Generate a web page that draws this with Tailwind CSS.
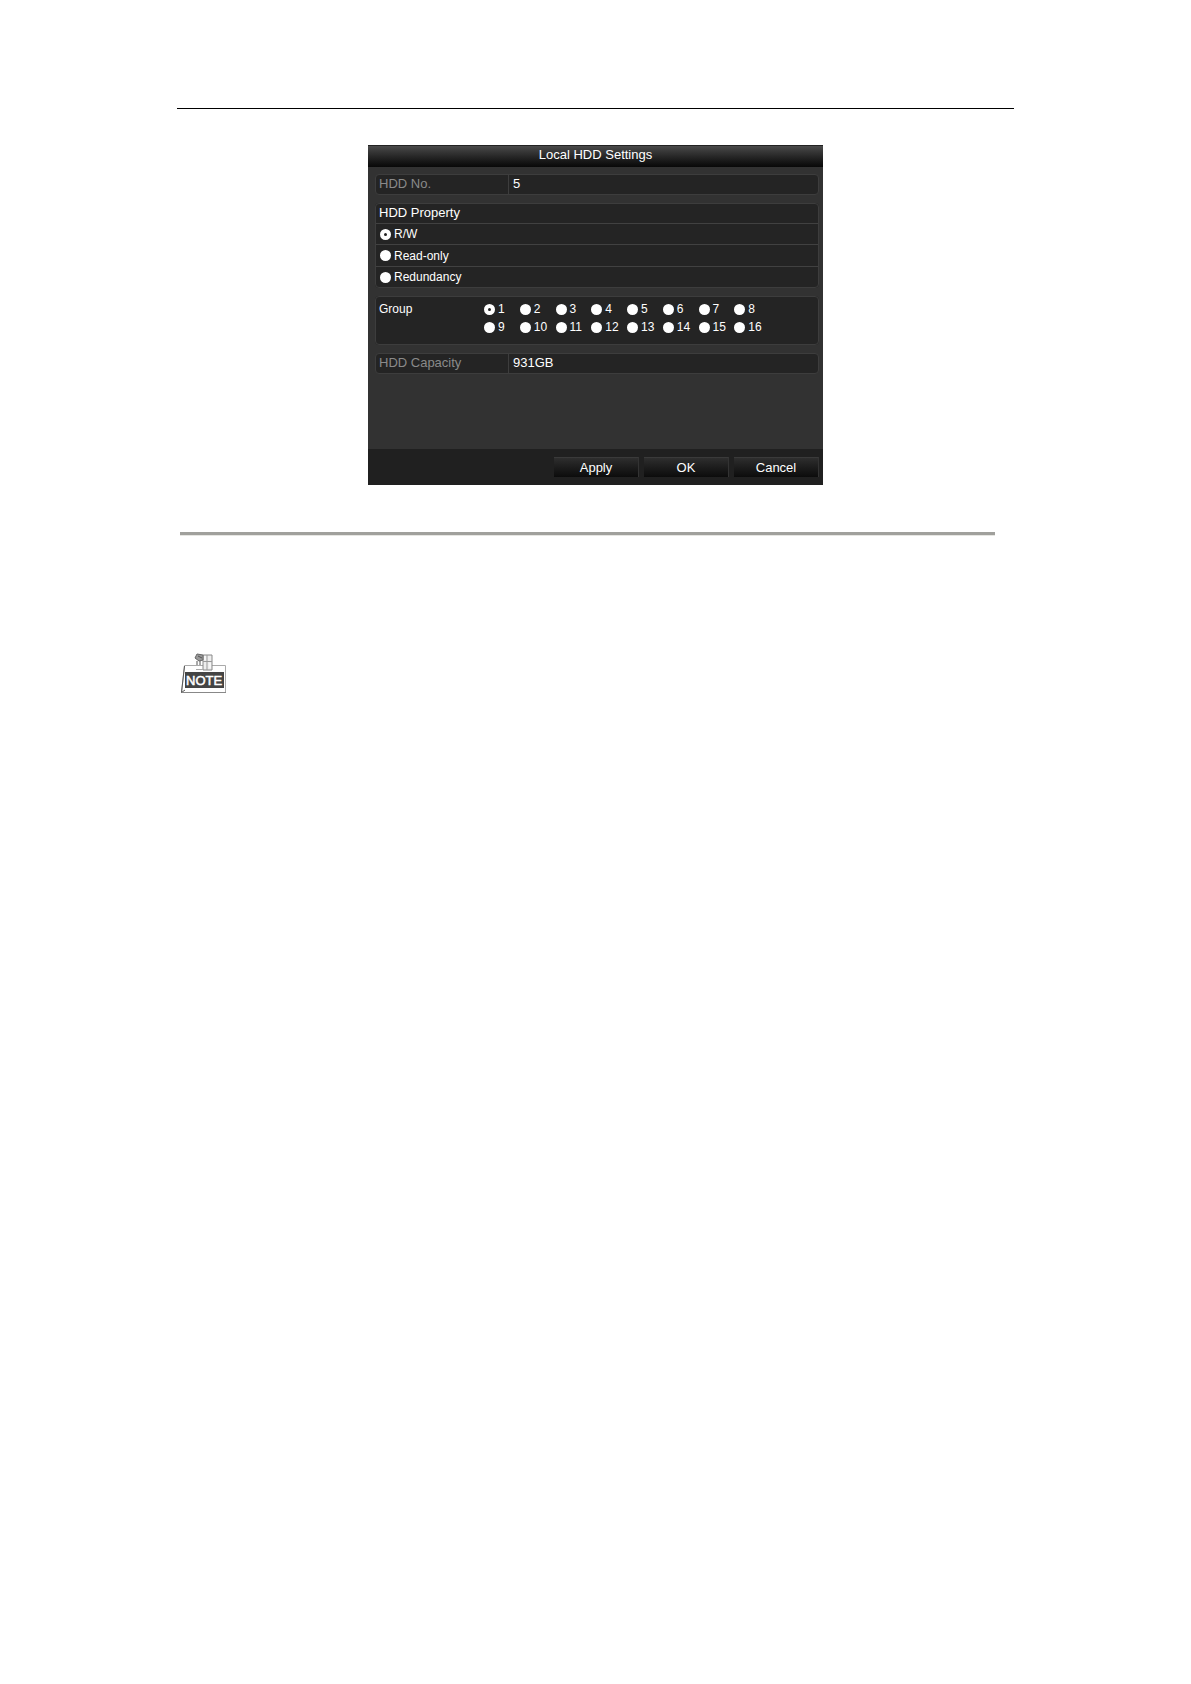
<!DOCTYPE html>
<html lang="en">
<head>
<meta charset="utf-8">
<meta name="viewport" content="width=device-width, initial-scale=1">
<title>Local HDD Settings</title>
<script src="https://cdn.jsdelivr.net/npm/@tailwindcss/browser@4"></script>
</head>
<body class="min-h-screen bg-white font-['Liberation_Sans',Arial,sans-serif]">
<main class="px-[177px] pt-[108px]">
  <hr class="border-t border-black">

  <form class="mx-auto mt-9 flex h-[340px] max-w-[455px] flex-col bg-[#323232] text-[13px] leading-5 text-white">
    <h1 class="h-[22px] border-t border-[#222] bg-linear-to-b from-[#4a4a4a] to-[#080808] text-center leading-[18px]">Local HDD Settings</h1>

    <div class="flex grow flex-col gap-2 pt-[7px] pr-1 pl-[7px]">
      <dl class="grid h-[21px] grid-cols-[133px_1fr] rounded-sm border border-[#3d3d3d] bg-[#242424] leading-[18px]">
        <dt class="border-r border-[#3d3d3d] pl-[3px] text-[#8a8a8a]">HDD No.</dt>
        <dd class="pl-1">5</dd>
      </dl>

      <fieldset class="h-[85px] divide-y divide-[#414141] rounded-sm border border-[#3d3d3d] bg-[#242424]" aria-labelledby="property">
        <div id="property" class="h-5 pl-[3px] leading-[18px]">HDD Property</div>
        <label class="flex h-[21px] items-center gap-[3px] pl-1 text-xs"><input type="radio" name="property" checked class="size-[11px] appearance-none rounded-full bg-white checked:border-4 checked:border-white checked:bg-[#222]">R/W</label>
        <label class="flex h-[22px] items-center gap-[3px] pl-1 text-xs"><input type="radio" name="property" class="size-[11px] appearance-none rounded-full bg-white checked:border-4 checked:border-white checked:bg-[#222]">Read-only</label>
        <label class="flex h-5 items-center gap-[3px] pl-1 text-xs"><input type="radio" name="property" class="size-[11px] appearance-none rounded-full bg-white checked:border-4 checked:border-white checked:bg-[#222]">Redundancy</label>
      </fieldset>

      <fieldset class="flex h-[49px] rounded-sm border border-[#3d3d3d] bg-[#242424] pt-[3px] pl-[3px]" aria-labelledby="group">
        <div id="group" class="w-[105px] text-xs leading-[18px]">Group</div>
        <div id="groups" class="grid w-[286px] grid-cols-8 grid-rows-[18px_18px] text-xs"></div>
      </fieldset>

      <dl class="grid h-[21px] grid-cols-[133px_1fr] rounded-sm border border-[#3d3d3d] bg-[#242424] leading-[18px]">
        <dt class="border-r border-[#3d3d3d] pl-[3px] text-[#8a8a8a]">HDD Capacity</dt>
        <dd class="pl-1">931GB</dd>
      </dl>
    </div>

    <div class="flex h-9 justify-end gap-[5px] bg-[#202020] pt-2 pr-1">
      <button type="button" class="h-5 w-[85px] border-t border-r border-t-[#3a3a3a] border-r-[#333] bg-linear-to-b from-[#2e2e2e] to-[#0c0c0c]">Apply</button>
      <button type="submit" class="h-5 w-[85px] border-t border-r border-t-[#3a3a3a] border-r-[#333] bg-linear-to-b from-[#2e2e2e] to-[#0c0c0c]">OK</button>
      <button type="button" class="h-5 w-[85px] border-t border-r border-t-[#3a3a3a] border-r-[#333] bg-linear-to-b from-[#2e2e2e] to-[#0c0c0c]">Cancel</button>
    </div>
  </form>

  <hr class="mt-[47px] mr-[19px] ml-[3px] h-1 border-t-3 border-b border-t-[#a0a09c] border-b-[#e6e6e2]">

  <svg class="mt-[116px] ml-1 block" width="46" height="42" viewBox="0 0 46 42" role="img" aria-label="Note">
    <path d="M3.500 13.500H44.500V40.500H.5L3.500 13.500Z" fill="#fff" stroke="#aaa"/>
    <path d="M3.500 14L.5 40.500L4 38" fill="none" stroke="#555"/>
    <path d="M1 40.500H45" stroke="#888"/>
    <rect x="4" y="20" width="39" height="16" fill="#444"/>
    <text x="5" y="33" font-size="13" fill="#fff" stroke="#fff" stroke-width=".5">NOTE</text>
    <path d="M22 3H31V18H22Z" fill="#eee" stroke="#888"/>
    <path d="M22 9.500H31M26 3V18" stroke="#999"/>
    <path d="M22 3L16 2L14 6L18 9L22 8Z" fill="#999" stroke="#666"/>
    <path d="M17 4L21 6M16 9V13M19 9V13" stroke="#555"/>
    <path d="M24 4V8M29 11V16" stroke="#fff"/>
    <path d="M15 17.500H22" stroke="#aaa"/>
  </svg>
</main>
<script>
  document.getElementById('groups').innerHTML = Array.from({ length: 16 }, (_, i) =>
    `<label class="flex items-center gap-[3px]"><input type="radio" name="group" ${i === 0 ? 'checked' : ''} class="size-[11px] shrink-0 appearance-none rounded-full bg-white checked:border-4 checked:border-white checked:bg-[#222]">${i + 1}</label>`
  ).join('');
</script>
</body>
</html>
